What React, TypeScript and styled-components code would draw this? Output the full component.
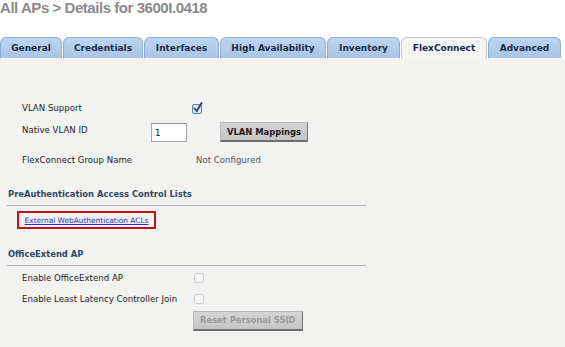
import React from 'react';
import styled, { createGlobalStyle } from 'styled-components';

const GlobalStyle = createGlobalStyle`
  html, body {
    margin: 0;
    padding: 0;
    background: #ffffff;
  }
  body {
    font-family: "DejaVu Sans", Verdana, sans-serif;
    width: 565px;
    height: 347px;
    overflow: hidden;
  }
`;

const Page = styled.div`
  width: 565px;
  height: 347px;
  display: flex;
  flex-direction: column;
  background: #ffffff;
`;

const Title = styled.h1`
  margin: 0;
  padding: 0;
  height: 37px;
  font-family: "Liberation Sans", Arial, sans-serif;
  font-size: 15px;
  font-weight: bold;
  letter-spacing: -0.45px;
  color: #8a8a8a;
  line-height: 16px;
`;

const TabBar = styled.div`
  display: flex;
  align-items: flex-end;
  height: 21px;
  gap: 1px;
`;

const Tab = styled.div<{ $active?: boolean; $w: number }>`
  width: ${p => p.$w}px;
  height: 21px;
  box-sizing: border-box;
  display: flex;
  align-items: center;
  justify-content: center;
  font-size: 9px;
  font-weight: bold;
  color: #1c2b48;
  border-radius: 6px 6px 0 0;
  border: 1px solid ${p => (p.$active ? '#c4c4c4' : '#8fb0d4')};
  border-bottom: none;
  background: ${p =>
    p.$active
      ? '#f4f4f3'
      : 'linear-gradient(to bottom, #bcd4ee 0%, #a7c5e6 100%)'};
`;

const Content = styled.div`
  flex: 1;
  background: #f2f2f1;
  padding: 40px 0 0 0;
  display: flex;
  flex-direction: column;
`;

const Row = styled.div<{ $h: number }>`
  display: flex;
  align-items: center;
  height: ${p => p.$h}px;
  padding-left: 22px;
`;

const Label = styled.div<{ $w: number; $up?: number }>`
  width: ${p => p.$w}px;
  flex-shrink: 0;
  font-size: 8.6px;
  color: #1e1e1e;
  margin-top: ${p => -(p.$up || 0)}px;
`;

const ValueText = styled.div<{ $ml?: number }>`
  margin-left: ${p => p.$ml || 0}px;
  font-size: 8.6px;
  color: #555555;
`;

const CheckWrap = styled.div<{ $ml?: number }>`
  margin-left: ${p => p.$ml || 0}px;
  width: 12px;
  height: 12px;
  display: flex;
`;

const TextInput = styled.div`
  width: 36px;
  height: 19px;
  box-sizing: border-box;
  background: #ffffff;
  border: 1px solid #a8a8a8;
  border-top-color: #8a8a8a;
  font-size: 8.6px;
  color: #111;
  padding: 4px 0 0 3px;
`;

const Button = styled.div<{ $disabled?: boolean; $ml?: number }>`
  margin-left: ${p => p.$ml || 0}px;
  height: 20px;
  box-sizing: border-box;
  padding: 0 6px;
  display: flex;
  align-items: center;
  background: linear-gradient(to bottom, #d4d4d4, #c6c6c6);
  border: 1px solid #b8b8b8;
  border-right-color: #777;
  border-bottom: 2px solid #6e6e6e;
  font-size: 8.4px;
  font-weight: bold;
  color: ${p => (p.$disabled ? '#9a9a9a' : '#1c1c1c')};
`;

const Section = styled.div<{ $h: number }>`
  height: ${p => p.$h}px;
  margin-left: 7px;
  width: 359px;
  border-bottom: 1px solid #a9afb6;
  box-sizing: border-box;
  display: flex;
  align-items: flex-end;
  padding: 0 0 6px 1px;
  font-size: 8.4px;
  font-weight: bold;
  color: #2f4863;
`;

const LinkBox = styled.div`
  margin: 5px 0 0 17px;
  width: 139px;
  height: 18px;
  box-sizing: border-box;
  border: 2px solid #c1121c;
  display: flex;
  align-items: center;
  justify-content: center;
`;

const Link = styled.a`
  font-size: 7.4px;
  color: #2b2fd0;
  text-decoration: underline;
  cursor: pointer;
`;

const Checked = () => (
  <svg width="12" height="12" viewBox="0 0 12 12">
    <rect x="0.5" y="2.5" width="9" height="9" rx="1.5" fill="#dbe6f3" stroke="#5d7fa8" />
    <path d="M2.5 6.5 L4.8 9 L9.5 1" fill="none" stroke="#24406a" strokeWidth="1.8" strokeLinecap="round" />
  </svg>
);

const Unchecked = () => (
  <svg width="12" height="12" viewBox="0 0 12 12">
    <rect x="1.5" y="1.5" width="9" height="9" rx="2" fill="#f7f7f7" stroke="#c9c9c9" />
  </svg>
);

const tabs: { name: string; w: number; active?: boolean }[] = [
  { name: 'General', w: 62 },
  { name: 'Credentials', w: 80 },
  { name: 'Interfaces', w: 75 },
  { name: 'High Availability', w: 106 },
  { name: 'Inventory', w: 73 },
  { name: 'FlexConnect', w: 86, active: true },
  { name: 'Advanced', w: 73 },
];

export default function App() {
  return (
    <Page>
      <GlobalStyle />
      <Title>All APs &gt; Details for 3600I.0418</Title>
      <TabBar>
        {tabs.map(t => (
          <Tab key={t.name} $w={t.w} $active={t.active}>
            {t.name}
          </Tab>
        ))}
      </TabBar>
      <Content>
        <Row $h={20}>
          <Label $w={170}>VLAN Support</Label>
          <CheckWrap>
            <Checked />
          </CheckWrap>
        </Row>
        <Row $h={28}>
          <Label $w={129} $up={5}>Native VLAN ID</Label>
          <TextInput>1</TextInput>
          <Button $ml={33}>VLAN Mappings</Button>
        </Row>
        <Row $h={28}>
          <Label $w={174}>FlexConnect Group Name</Label>
          <ValueText>Not Configured</ValueText>
        </Row>
        <Section $h={32}>PreAuthentication Access Control Lists</Section>
        <LinkBox>
          <Link>External WebAuthentication ACLs</Link>
        </LinkBox>
        <Section $h={37}>OfficeExtend AP</Section>
        <Row $h={24}>
          <Label $w={171}>Enable OfficeExtend AP</Label>
          <CheckWrap>
            <Unchecked />
          </CheckWrap>
        </Row>
        <Row $h={18}>
          <Label $w={171}>Enable Least Latency Controller Join</Label>
          <CheckWrap>
            <Unchecked />
          </CheckWrap>
        </Row>
        <Row $h={25}>
          <Label $w={171} />
          <Button $disabled>Reset Personal SSID</Button>
        </Row>
      </Content>
    </Page>
  );
}
